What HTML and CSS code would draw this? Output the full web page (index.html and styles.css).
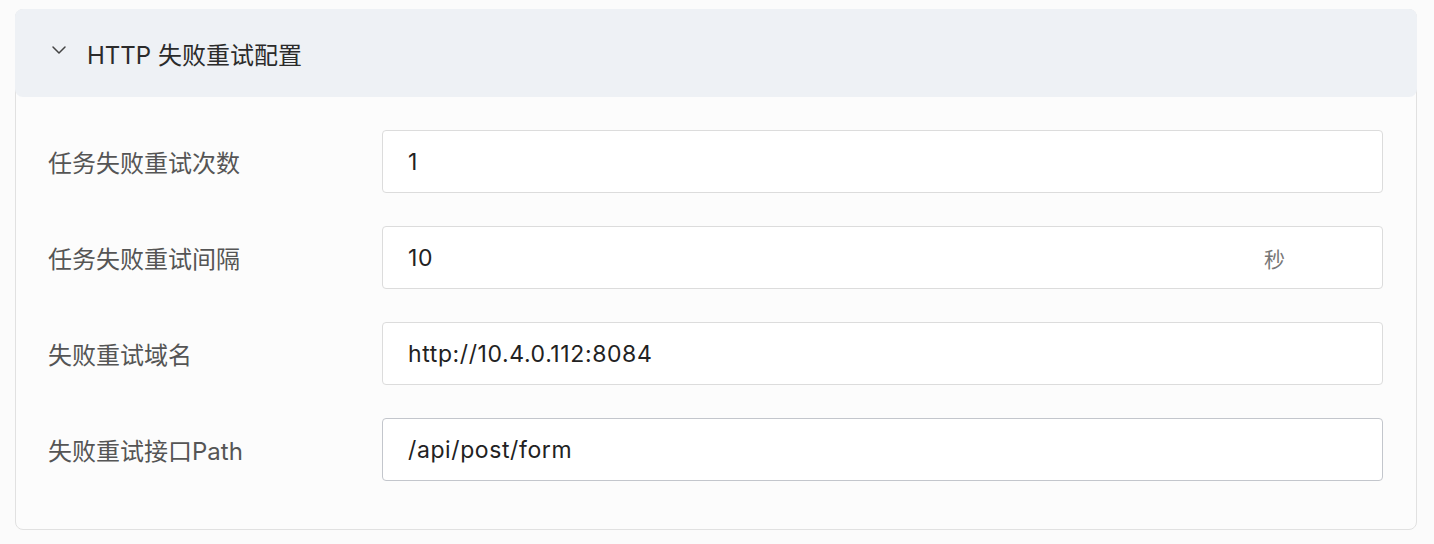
FILE: index.html
```html
<!DOCTYPE html>
<html lang="zh">
<head>
<meta charset="utf-8">
<link rel="stylesheet" href="styles.css">
</head>
<body>
<div class="page">
  <section class="card">
    <header class="card-head">
      <svg class="chev" width="16" height="10" viewBox="0 0 16 10"><path d="M2 2 L8 8 L14 2" fill="none" stroke="#444" stroke-width="1.5" stroke-linecap="round" stroke-linejoin="round"/></svg>
      <span class="title">HTTP 失败重试配置</span>
    </header>
    <div class="card-body">
      <div class="row">
        <label class="label">任务失败重试次数</label>
        <div class="field"><span class="value">1</span></div>
      </div>
      <div class="row">
        <label class="label">任务失败重试间隔</label>
        <div class="field"><span class="value">10</span><span class="suffix">秒</span></div>
      </div>
      <div class="row">
        <label class="label">失败重试域名</label>
        <div class="field"><span class="value">http://10.4.0.112:8084</span></div>
      </div>
      <div class="row">
        <label class="label">失败重试接口Path</label>
        <div class="field hover"><span class="value">/api/post/form</span></div>
      </div>
    </div>
  </section>
</div>
</body>
</html>
```

FILE: styles.css
```css
html, body {
  margin: 0;
  padding: 0;
  background: #fbfbfb;
}
body {
  font-family: "Inter", "Noto Sans CJK SC", sans-serif;
  font-size: 24px;
}
.page {
  padding: 9px 17px 14px 15px;
}
.card {
  border: 1px solid #e1e1e1;
  border-radius: 8px;
  background: #fcfcfc;
}
.card-head {
  height: 88px;
  margin: -1px -1px 0 -1px;
  background: #eef1f5;
  border-radius: 8px;
  display: flex;
  align-items: center;
  padding-left: 36px;
  box-sizing: border-box;
}
.chev {
  margin-top: -6px;
  margin-right: 20px;
}
.title {
  color: #2b2b2b;
  font-size: 24px;
  margin-top: 1px;
}
.card-body {
  padding: 33px 33px 48px 32px;
  display: flex;
  flex-direction: column;
  gap: 33px;
}
.row {
  display: flex;
  align-items: center;
}
.label {
  width: 334px;
  flex: none;
  color: #555;
  font-size: 24px;
}
.field {
  flex: 1;
  height: 63px;
  box-sizing: border-box;
  border: 1px solid #dcdcdc;
  border-radius: 4px;
  background: #fff;
  display: flex;
  align-items: center;
  padding: 0 97px 0 25px;
}
.field.hover {
  border-color: #c3c6cc;
}
.value {
  flex: 1;
  color: #222;
  font-size: 23px;
  letter-spacing: 0.6px;
}
.suffix {
  color: #777;
  font-size: 21px;
}
```
